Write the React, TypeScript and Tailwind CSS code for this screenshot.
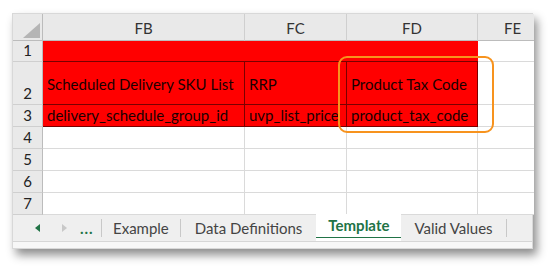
import React from "react";

const font = { fontFamily: "Lato, 'Open Sans', sans-serif" };

function ColHead({ label, last }: { label: string; last?: boolean }) {
  return (
    <div
      className={`flex items-center justify-center border-b border-[#bcbcbc] bg-[#e9e9e9] pt-[3px] text-[15px] text-[#333] ${
        last ? "" : "border-r border-r-[#cfcfcf]"
      }`}
    >
      {label}
    </div>
  );
}

function RowHead({ n }: { n: number }) {
  return (
    <div className="flex items-end justify-center border-r border-b border-r-[#bcbcbc] border-b-[#cfcfcf] bg-[#e9e9e9] pb-[1px] text-[15px] leading-[20px] text-[#222]">
      {n}
    </div>
  );
}

function Cell({ last }: { last?: boolean }) {
  return (
    <div
      className={`border-b border-[#dadada] bg-white ${last ? "" : "border-r"}`}
    />
  );
}

function RedCell({ text, cls = "" }: { text: string; cls?: string }) {
  return (
    <div
      className={`flex items-end overflow-hidden whitespace-nowrap border-r border-b border-[#7a0000] bg-[#ff0000] pb-[1px] pl-[4px] text-[15px] leading-[20px] text-[#1a0000] ${cls}`}
    >
      {text}
    </div>
  );
}

export default function App() {
  return (
    <div className="h-[272px] w-[560px] bg-white pt-[13px] pl-[12px]" style={font}>
      <div className="relative w-[521px] border border-[#d8d8d8] bg-white shadow-[4px_6px_9px_rgba(0,0,0,0.45)]">
        <div className="grid grid-cols-[30px_202px_102px_131px_56px] grid-rows-[27px_21px_43px_22px_22px_22px_22px_22px]">
          {/* corner */}
          <div className="relative border-r border-b border-[#bcbcbc] bg-[#e9e9e9]">
            <svg className="absolute right-[2px] bottom-[2px]" width="17" height="15" viewBox="0 0 17 15">
              <polygon points="17,0 17,15 0,15" fill="#b5b5b5" />
            </svg>
          </div>
          <ColHead label="FB" />
          <ColHead label="FC" />
          <ColHead label="FD" />
          <div className="flex items-center overflow-hidden border-b border-[#bcbcbc] bg-[#e9e9e9] pt-[3px] pl-[26px] text-[15px] text-[#333]">
            FE
          </div>

          {/* row 1 */}
          <RowHead n={1} />
          <div className="col-span-3 border-b border-[#7a0000] bg-[#ff0000]" />
          <Cell last />

          {/* row 2 */}
          <RowHead n={2} />
          <RedCell text="Scheduled Delivery SKU List" cls="pb-[10px]" />
          <RedCell text="RRP" cls="pb-[10px]" />
          <RedCell text="Product Tax Code" cls="pb-[10px]" />
          <Cell last />

          {/* row 3 */}
          <RowHead n={3} />
          <RedCell text="delivery_schedule_group_id" />
          <RedCell text="uvp_list_price" />
          <RedCell text="product_tax_code" />
          <Cell last />

          {[4, 5, 6, 7].map((n) => (
            <React.Fragment key={n}>
              <RowHead n={n} />
              <Cell />
              <Cell />
              <Cell />
              <Cell last />
            </React.Fragment>
          ))}
        </div>

        {/* sheet tabs */}
        <div className="flex h-[26px] items-stretch bg-[#efefef] text-[15px] text-[#444]">
          <div className="flex w-[88px] items-center pl-[22px]">
            <svg width="6" height="8" viewBox="0 0 6 8" className="mr-[20px]">
              <polygon points="5,0 5,8 0,4" fill="#217346" />
            </svg>
            <svg width="6" height="8" viewBox="0 0 6 8" className="mr-[13px]">
              <polygon points="1,0 1,8 6,4" fill="#c8c8c8" />
            </svg>
            <span className="font-bold leading-none tracking-[1px] text-[#217346]">...</span>
          </div>
          <div className="my-[4px] w-px bg-[#c8c8c8]" />
          <div className="flex items-center px-[11px]">Example</div>
          <div className="my-[4px] w-px bg-[#c8c8c8]" />
          <div className="flex items-center px-[14px]">Data Definitions</div>
          <div className="-mt-px flex flex-col bg-white px-[12px]">
            <div className="flex flex-1 items-center font-bold text-[#217346]">Template</div>
            <div className="-mx-[12px] mb-[3px] h-[2px] bg-[#217346]" />
          </div>
          <div className="flex items-center px-[13px]">Valid Values</div>
          <div className="my-[4px] w-px bg-[#c8c8c8]" />
        </div>
        <div className="h-[7px] border-t border-[#d6d6d6] bg-[#f7f7f7]" />

        {/* highlight */}
        <div className="absolute top-[42px] left-[325px] h-[77px] w-[156px] rounded-[9px] border-2 border-[#f7931e]" />
      </div>
    </div>
  );
}
